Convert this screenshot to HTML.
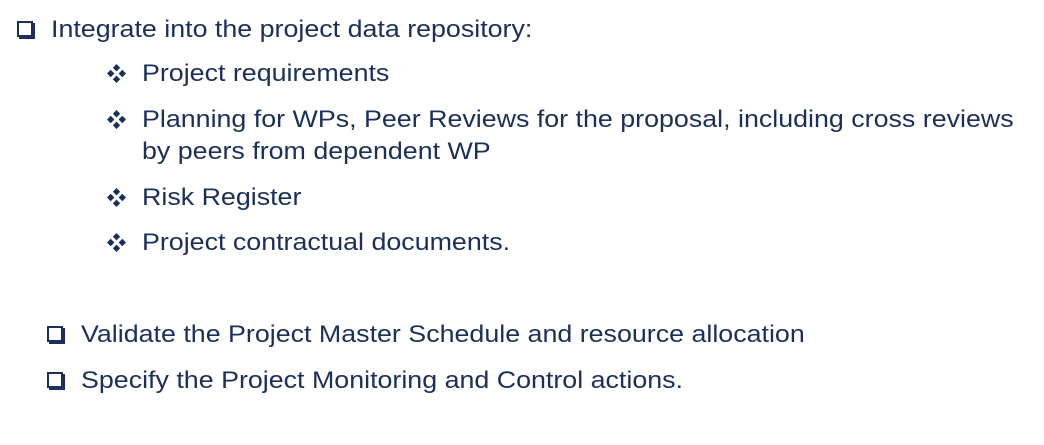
<!DOCTYPE html><html><head><style>
body{margin:0;width:1044px;height:445px;background:#fff;position:relative;overflow:hidden;font-family:"Liberation Sans",sans-serif;color:#1b2f5b;font-size:24px}
.t{position:absolute;white-space:nowrap;line-height:1;transform:scaleX(1.117);transform-origin:0 0}
.cb{position:absolute;width:12px;height:12px;border:2px solid #1b2f5b;box-shadow:2px 2px 0 #1b2f5b;background:#fff}
.d{position:absolute;width:19px;height:19px}
</style></head><body>
<div class="cb" style="left:17px;top:21px"></div>
<div class="t" style="left:51px;top:18px">Integrate into the project data repository:</div>
<svg class="d" style="left:107px;top:64px" viewBox="0 0 18 18"><g fill="#1b2f5b"><path d="M9 0l3.5 3.5-3.5 3.5-3.5-3.5z"/><path d="M9 11l3.5 3.5-3.5 3.5-3.5-3.5z"/><path d="M3.5 5.5l3.5 3.5-3.5 3.5-3.5-3.5z"/><path d="M14.5 5.5l3.5 3.5-3.5 3.5-3.5-3.5z"/></g></svg>
<div class="t" style="left:142px;top:62px">Project requirements</div>
<svg class="d" style="left:107px;top:110px" viewBox="0 0 18 18"><g fill="#1b2f5b"><path d="M9 0l3.5 3.5-3.5 3.5-3.5-3.5z"/><path d="M9 11l3.5 3.5-3.5 3.5-3.5-3.5z"/><path d="M3.5 5.5l3.5 3.5-3.5 3.5-3.5-3.5z"/><path d="M14.5 5.5l3.5 3.5-3.5 3.5-3.5-3.5z"/></g></svg>
<div class="t" style="left:142px;top:108px">Planning for WPs, Peer Reviews for the proposal, including cross reviews</div>
<div class="t" style="left:142px;top:140px">by peers from dependent WP</div>
<svg class="d" style="left:107px;top:188px" viewBox="0 0 18 18"><g fill="#1b2f5b"><path d="M9 0l3.5 3.5-3.5 3.5-3.5-3.5z"/><path d="M9 11l3.5 3.5-3.5 3.5-3.5-3.5z"/><path d="M3.5 5.5l3.5 3.5-3.5 3.5-3.5-3.5z"/><path d="M14.5 5.5l3.5 3.5-3.5 3.5-3.5-3.5z"/></g></svg>
<div class="t" style="left:142px;top:186px">Risk Register</div>
<svg class="d" style="left:107px;top:233px" viewBox="0 0 18 18"><g fill="#1b2f5b"><path d="M9 0l3.5 3.5-3.5 3.5-3.5-3.5z"/><path d="M9 11l3.5 3.5-3.5 3.5-3.5-3.5z"/><path d="M3.5 5.5l3.5 3.5-3.5 3.5-3.5-3.5z"/><path d="M14.5 5.5l3.5 3.5-3.5 3.5-3.5-3.5z"/></g></svg>
<div class="t" style="left:142px;top:231px">Project contractual documents.</div>
<div class="cb" style="left:47px;top:326px"></div>
<div class="t" style="left:81px;top:323px">Validate the Project Master Schedule and resource allocation</div>
<div class="cb" style="left:47px;top:372px"></div>
<div class="t" style="left:81px;top:369px">Specify the Project Monitoring and Control actions.</div>
</body></html>
